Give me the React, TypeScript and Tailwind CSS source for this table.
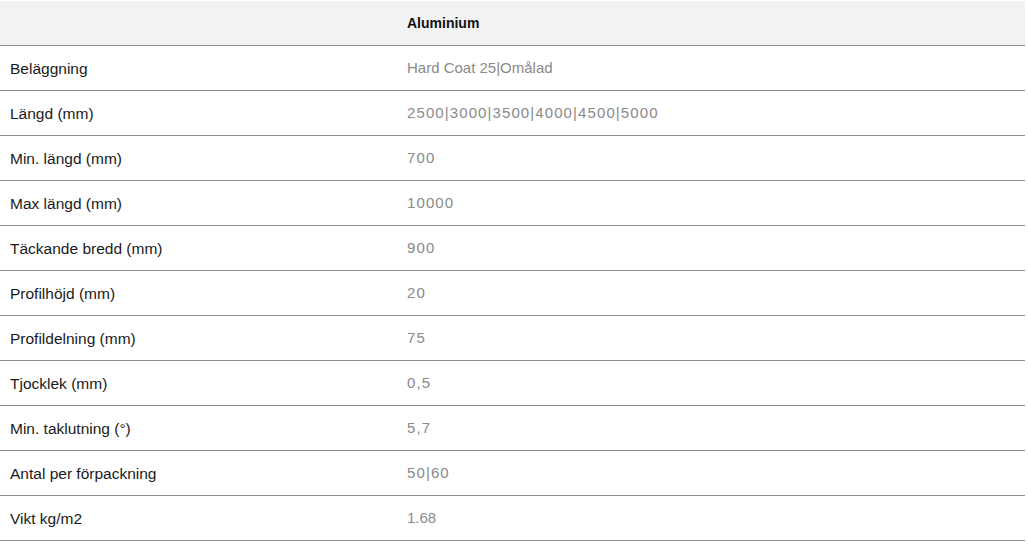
const rows: [string, string][] = [
  ["Beläggning", "Hard Coat 25|Omålad"],
  ["Längd (mm)", "2500|3000|3500|4000|4500|5000"],
  ["Min. längd (mm)", "700"],
  ["Max längd (mm)", "10000"],
  ["Täckande bredd (mm)", "900"],
  ["Profilhöjd (mm)", "20"],
  ["Profildelning (mm)", "75"],
  ["Tjocklek (mm)", "0,5"],
  ["Min. taklutning (°)", "5,7"],
  ["Antal per förpackning", "50|60"],
  ["Vikt kg/m2", "1.68"],
];

export default function App() {
  return (
    <div className="min-h-screen bg-white pt-px font-['Liberation_Sans',Arial,sans-serif]">
      <table className="w-[1025px] border-collapse">
        <thead>
          <tr className="h-[44px] bg-[#f2f2f2] border-b border-[#8c8c8c]">
            <th className="w-[397px]"></th>
            <th className="px-[10px] pt-[2px] text-left text-[14px] font-bold text-[#111]">Aluminium</th>
          </tr>
        </thead>
        <tbody>
          {rows.map(([label, value]) => (
            <tr key={label} className="h-[45px] border-b border-[#8c8c8c]">
              <td className="px-[10px] pt-[2px] text-[15.5px] text-[#1a1a1a]">{label}</td>
              <td
                className={
                  /^[\d|,]+$/.test(value)
                    ? "px-[10px] pt-[2px] text-[15px] tracking-[1.1px] text-[#8a8a8a]"
                    : "px-[10px] pt-[2px] text-[15px] text-[#8a8a8a]"
                }
              >
                {value}
              </td>
            </tr>
          ))}
        </tbody>
      </table>
    </div>
  );
}
